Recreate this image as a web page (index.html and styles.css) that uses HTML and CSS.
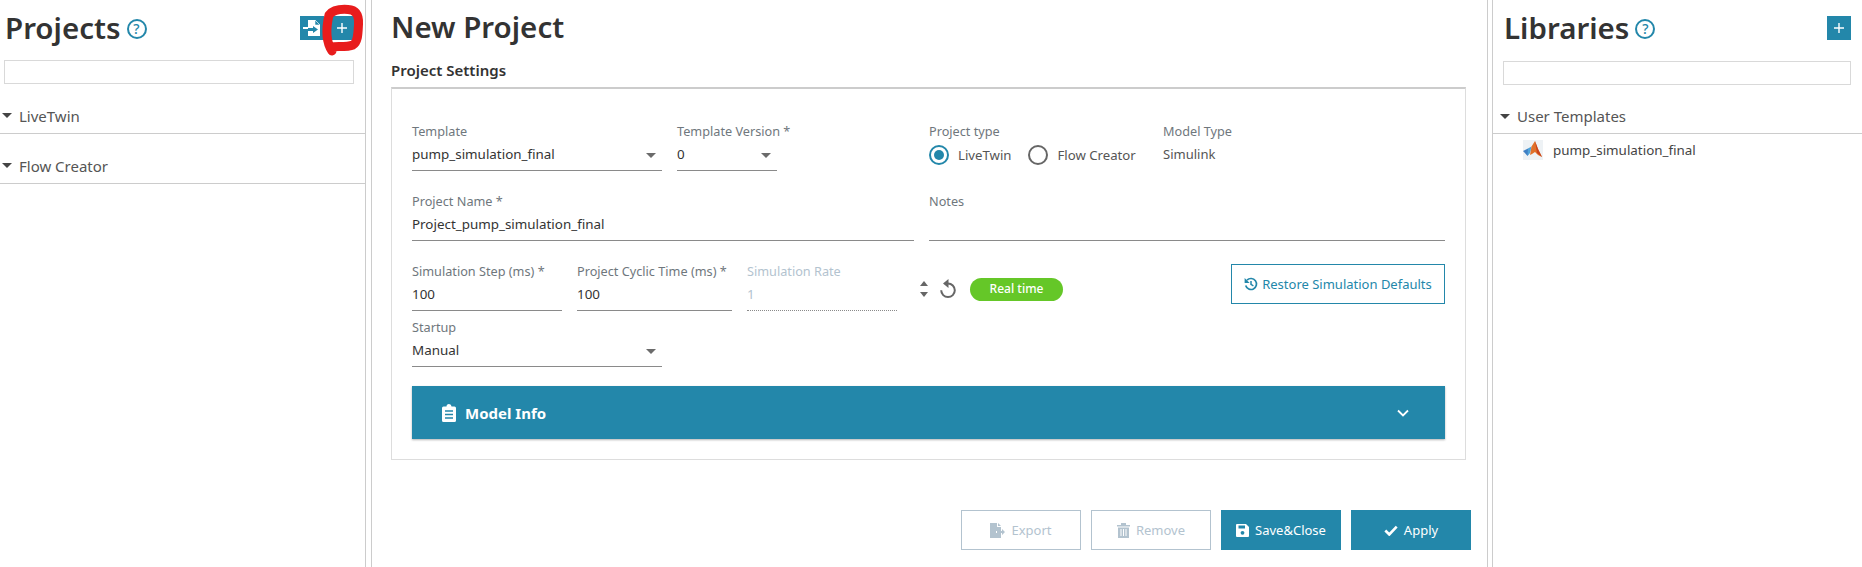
FILE: index.html
```html
<!DOCTYPE html>
<html lang="en">
<head>
    <meta charset="UTF-8" />
    <title>New Project</title>
    <link rel="stylesheet" href="styles.css">
</head>
<body>
    <aside class="panel panel-left">
        <div class="panel-head">
            <h1 class="panel-title">Projects</h1>
            <span class="help">?</span>
            <div class="head-actions">
                <button class="icon-btn">
                    <svg width="18" height="18" viewBox="0 0 18 18"><path d="M5 1h7l5 5v11H5v-5h5v2l5-3.500-5-3.500v2H5z" fill="#fff"/><path d="M0 8h5v2H0z" fill="#fff"/><path d="M12 1l5 5h-5z" fill="#2387aa" stroke="#fff" stroke-width=".6"/></svg>
                </button>
                <button class="icon-btn">
                    <svg width="10" height="10" viewBox="0 0 10 10"><path d="M4.300 0h1.400v4.300H10v1.400H5.700V10H4.300V5.700H0V4.300h4.300z" fill="#fff"/></svg>
                </button>
            </div>
        </div>
        <div class="search"></div>
        <div class="tree-head"><span class="caret"></span>LiveTwin</div>
        <div class="tree-head"><span class="caret"></span>Flow Creator</div>
    </aside>

    <main class="panel panel-center">
        <h1 class="page-title">New Project</h1>
        <h2 class="section-title">Project Settings</h2>
        <div class="card">
            <div class="row row-first">
                <div class="left-group">
                    <div class="field w-250">
                        <label>Template</label>
                        <div class="value select">pump_simulation_final<span class="select-arrow"></span></div>
                    </div>
                    <div class="field w-100">
                        <label>Template Version *</label>
                        <div class="value select">0<span class="select-arrow"></span></div>
                    </div>
                </div>
                <div class="field-plain type-col">
                    <label>Project type</label>
                    <div class="radios">
                        <span class="radio checked"></span><span class="radio-text">LiveTwin</span>
                        <span class="radio"></span><span class="radio-text">Flow Creator</span>
                    </div>
                </div>
                <div class="field-plain">
                    <label>Model Type</label>
                    <div class="plain-value">Simulink</div>
                </div>
            </div>

            <div class="row">
                <div class="field name-col">
                    <label>Project Name *</label>
                    <div class="value">Project_pump_simulation_final</div>
                </div>
                <div class="field notes-col">
                    <label>Notes</label>
                    <div class="value"></div>
                </div>
            </div>

            <div class="row row-sim">
                <div class="field w-150">
                    <label>Simulation Step (ms) *</label>
                    <div class="value">100</div>
                </div>
                <div class="field w-155">
                    <label>Project Cyclic Time (ms) *</label>
                    <div class="value">100</div>
                </div>
                <div class="field w-150 disabled">
                    <label>Simulation Rate</label>
                    <div class="value">1</div>
                </div>
                <div class="sim-tools">
                    <span class="spinner"><i class="up"></i><i class="down"></i></span>
                    <svg class="reset" width="18" height="20" viewBox="0 0 18 20"><path d="M9 4.500a6.800 6.800 0 1 1-6.800 6.800" fill="none" stroke="#666" stroke-width="2"/><path d="M9.500 0v9L4 4.500z" fill="#666"/></svg>
                    <span class="pill">Real time</span>
                </div>
                <button class="restore">
                    <svg width="14" height="14" viewBox="0 0 14 14"><path d="M3 3.200A5.500 5.500 0 1 1 1.700 8.500" fill="none" stroke="#2387aa" stroke-width="1.700"/><path d="M.6 1v5h5z" fill="#2387aa"/><path d="M7 4v3.400l2.400 1.400" fill="none" stroke="#2387aa" stroke-width="1.500"/></svg>
                    Restore Simulation Defaults
                </button>
            </div>

            <div class="row row-startup">
                <div class="field w-250">
                    <label>Startup</label>
                    <div class="value select">Manual<span class="select-arrow"></span></div>
                </div>
            </div>

            <div class="accordion">
                <svg width="14" height="18" viewBox="0 0 14 18"><path d="M1.500 2.500H4.500a2.500 2.500 0 0 1 5 0h3A1.500 1.500 0 0 1 14 4v12.500a1.500 1.500 0 0 1-1.500 1.500h-11A1.500 1.500 0 0 1 0 16.500V4a1.500 1.500 0 0 1 1.500-1.500z" fill="#fff"/><path d="M3 7h8M3 10.500h8M3 14h8" stroke="#2387aa" stroke-width="1.300"/></svg>
                <span class="accordion-text">Model Info</span>
                <svg class="chevron" width="12" height="8" viewBox="0 0 12 8"><path d="M1 1.500l5 5 5-5" fill="none" stroke="#fff" stroke-width="1.800"/></svg>
            </div>
        </div>

        <div class="footer">
            <button class="btn btn-off">
                <svg width="15" height="15" viewBox="0 0 15 15"><path d="M0 0h7v4h4v4H6v2h5v5H0z" fill="#b3c3cf"/><path d="M8 0l3 3H8z" fill="#b3c3cf"/><path d="M7 8h5V6l3 3-3 3v-2H7z" fill="#b3c3cf"/></svg>
                Export
            </button>
            <button class="btn btn-off">
                <svg width="13" height="15" viewBox="0 0 13 15"><path d="M0 2h4V0h5v2h4v1.500H0zM1 4.500h11V15H1z" fill="#b3c3cf"/><path d="M4 6v7M6.500 6v7M9 6v7" stroke="#fff"/></svg>
                Remove
            </button>
            <button class="btn btn-on">
                <svg width="13" height="13" viewBox="0 0 13 13"><path d="M1 0h9l3 3v9a1 1 0 0 1-1 1H1a1 1 0 0 1-1-1V1a1 1 0 0 1 1-1z" fill="#fff"/><path d="M2.500 1.500h6.500v3H2.500z" fill="#2387aa"/><circle cx="6.500" cy="8.800" r="1.900" fill="#2387aa"/></svg>
                Save&amp;Close
            </button>
            <button class="btn btn-on">
                <svg width="14" height="11" viewBox="0 0 14 11"><path d="M1.300 5.500l4 4 7.400-7.800" fill="none" stroke="#fff" stroke-width="2.600"/></svg>
                Apply
            </button>
        </div>
    </main>

    <aside class="panel panel-right">
        <div class="panel-head">
            <h1 class="panel-title">Libraries</h1>
            <span class="help">?</span>
            <div class="head-actions">
                <button class="icon-btn">
                    <svg width="10" height="10" viewBox="0 0 10 10"><path d="M4.300 0h1.400v4.300H10v1.400H5.700V10H4.300V5.700H0V4.300h4.300z" fill="#fff"/></svg>
                </button>
            </div>
        </div>
        <div class="search"></div>
        <div class="tree-head"><span class="caret"></span>User Templates</div>
        <div class="tree-item">
            <svg width="20" height="20" viewBox="0 0 20 20">
                <path d="M0 0h20v20H0z" fill="#eef2f5"/>
                <path d="M0 11l5-2.500 2.500 2L4.500 16z" fill="#3f7fc4"/>
                <path d="M5 8.500l3.500-2L7 13 4.500 16z" fill="#4fa3d9"/>
                <path d="M8.500 6.500L12 1l3 8 4 8-4-2-3-3-3 2-2 1z" fill="#e0712a"/>
                <path d="M12 1l3 8 4 8-5-4z" fill="#c9431d"/>
            </svg>
            pump_simulation_final
        </div>
    </aside>

    <svg class="scribble" width="60" height="70" viewBox="0 0 60 70">
        <path d="M12 15C16 10 24 9 31 9.500c7 .5 11 4.500 10.500 14.500C41 34 41 42 36 45c-6 2.500-16 1-22 2l1 4C9 42 9 28 12 15z" fill="none" stroke="#e81c1c" stroke-width="9" stroke-linejoin="round" stroke-linecap="round"/>
    </svg>
</body>
</html>
```

FILE: styles.css
```css
* {
    box-sizing: border-box;
}

body {
    margin: 0;
    height: 567px;
    overflow: hidden;
    display: flex;
    background-color: #fff;
    color: #333;
    font-family: "Noto Sans", Arial, sans-serif;
    font-size: 13.400px;
    position: relative;
}

h1, h2 {
    margin: 0;
}

button {
    font-family: inherit;
    cursor: pointer;
}

.panel {
    height: 100%;
}

.panel-left {
    width: 366px;
    border-right: 1px solid #ccc;
}

.panel-center {
    width: 1117px;
    padding-left: 19px;
    border-left: 1px solid #ccc;
    border-right: 1px solid #ccc;
    margin-left: 5px;
}

.panel-right {
    flex: 1;
    border-left: 1px solid #ccc;
    margin-left: 4px;
    padding-left: 10px;
}

.panel-head {
    display: flex;
    align-items: center;
    height: 56px;
    padding-left: 5px;
    padding-right: 11px;
}

.panel-right .panel-head {
    padding-left: 1px;
}

.panel-title {
    font-size: 29.500px;
    font-weight: 600;
    line-height: 54px;
    color: #333;
}

.help {
    width: 20px;
    height: 20px;
    margin-left: 6px;
    margin-top: 2px;
    border: 2px solid #2387aa;
    border-radius: 50%;
    color: #2387aa;
    font-size: 14px;
    font-weight: 500;
    line-height: 16px;
    text-align: center;
}

.head-actions {
    margin-left: auto;
    display: flex;
    gap: 6px;
}

.icon-btn {
    width: 24px;
    height: 24px;
    padding: 0;
    border: none;
    background-color: #2387aa;
    display: flex;
    align-items: center;
    justify-content: center;
}

.search {
    height: 24px;
    margin: 4px 11px 0 4px;
    border: 1px solid #d9d9d9;
}

.panel-right .search {
    margin: 5px 11px 0 0;
}

.tree-head {
    height: 50px;
    padding-top: 14px;
    display: flex;
    align-items: center;
    border-bottom: 1px solid #ccc;
    font-size: 15px;
    color: #555;
}

.panel-right .tree-head {
    height: 49px;
    margin-left: -10px;
    padding-left: 5px;
}

.caret {
    width: 0;
    height: 0;
    margin: 0 7px 0 2px;
    border-left: 5px solid transparent;
    border-right: 5px solid transparent;
    border-top: 5px solid #444;
}

.tree-item {
    display: flex;
    align-items: center;
    gap: 10px;
    padding: 6px 0 0 20px;
    color: #444;
}

.page-title {
    height: 56px;
    line-height: 54px;
    font-size: 29.500px;
    font-weight: 600;
}

.section-title {
    height: 31px;
    line-height: 28px;
    font-size: 15px;
    font-weight: 600;
}

.card {
    width: 1075px;
    height: 373px;
    padding: 0 20px;
    border: 1px solid #ddd;
    border-top: 2px solid #ccc;
}

.row {
    display: flex;
    margin-top: 20px;
}

.row-first {
    margin-top: 33px;
}

.row-sim {
    margin-top: 21px;
    gap: 15px;
}

.row-startup {
    margin-top: 6px;
}

.left-group {
    display: flex;
    gap: 15px;
    width: 502px;
    margin-right: 15px;
}

label {
    display: block;
    height: 20px;
    line-height: 18px;
    font-size: 12.700px;
    color: #6f777d;
    white-space: nowrap;
}

.field {
    height: 49px;
    flex-shrink: 0;
}

.value {
    height: 29px;
    padding-top: 2px;
    border-bottom: 1px solid #8a8a8a;
    line-height: 20px;
    position: relative;
}

.select-arrow {
    position: absolute;
    right: 6px;
    top: 11px;
    border-left: 5px solid transparent;
    border-right: 5px solid transparent;
    border-top: 5px solid #6b6b6b;
}

.disabled label {
    color: #b3c3cf;
}

.disabled .value {
    color: #b3c3cf;
    border-bottom: 1px dotted #8a8a8a;
}

.w-100 { width: 100px; }
.w-150 { width: 150px; }
.w-155 { width: 155px; }
.w-250 { width: 250px; }

.name-col {
    width: 502px;
    margin-right: 15px;
}

.notes-col {
    flex: 1;
}

.type-col {
    width: 234px;
}

.plain-value {
    height: 30px;
    line-height: 24px;
    font-size: 13px;
    color: #555;
}

.radios {
    display: flex;
    align-items: center;
    height: 26px;
    font-size: 13.200px;
    color: #555;
}

.radio {
    width: 20px;
    height: 20px;
    border: 2px solid #666;
    border-radius: 50%;
    margin-right: 9px;
    position: relative;
}

.radio.checked {
    border-color: #2387aa;
}

.radio.checked::after {
    content: "";
    position: absolute;
    left: 3px;
    top: 3px;
    width: 10px;
    height: 10px;
    border-radius: 50%;
    background-color: #2387aa;
}

.radio-text {
    margin-right: 17px;
}

.sim-tools {
    display: flex;
    align-items: center;
    height: 50px;
    padding-top: 4px;
    margin-left: 8px;
}

.spinner {
    display: flex;
    flex-direction: column;
    gap: 6px;
    margin-right: 11px;
}

.spinner i {
    display: block;
    border-left: 4px solid transparent;
    border-right: 4px solid transparent;
}

.spinner .up {
    border-bottom: 5px solid #666;
}

.spinner .down {
    border-top: 5px solid #666;
}

.pill {
    margin-left: 13px;
    width: 93px;
    height: 23px;
    line-height: 22px;
    border-radius: 12px;
    background-color: #65c728;
    color: #fff;
    font-size: 12px;
    font-weight: 500;
    text-align: center;
}

.restore {
    margin-left: auto;
    margin-top: 2px;
    width: 214px;
    height: 40px;
    padding: 0;
    display: flex;
    align-items: center;
    justify-content: center;
    gap: 4px;
    background-color: #fff;
    border: 1px solid #2387aa;
    color: #2387aa;
    font-size: 13px;
}

.accordion {
    height: 53px;
    margin-top: 19px;
    padding: 0 36px 0 30px;
    display: flex;
    align-items: center;
    background-color: #2387aa;
    box-shadow: 0 1px 2px rgba(0, 0, 0, 0.3);
    color: #fff;
}

.accordion-text {
    margin-left: 9px;
    font-size: 15px;
    font-weight: 700;
}

.chevron {
    margin-left: auto;
}

.footer {
    display: flex;
    justify-content: flex-end;
    gap: 10px;
    margin-top: 50px;
    margin-right: 16px;
}

.btn {
    width: 120px;
    height: 40px;
    padding: 0;
    display: flex;
    align-items: center;
    justify-content: center;
    gap: 6px;
    font-size: 13px;
}

.btn-off {
    background-color: #fff;
    border: 1px solid #b3c3cf;
    color: #b3c3cf;
}

.btn-on {
    background-color: #2387aa;
    border: none;
    color: #fff;
}

/* red marker annotation over the add button */
.scribble {
    position: absolute;
    left: 317px;
    top: 0;
}
```
